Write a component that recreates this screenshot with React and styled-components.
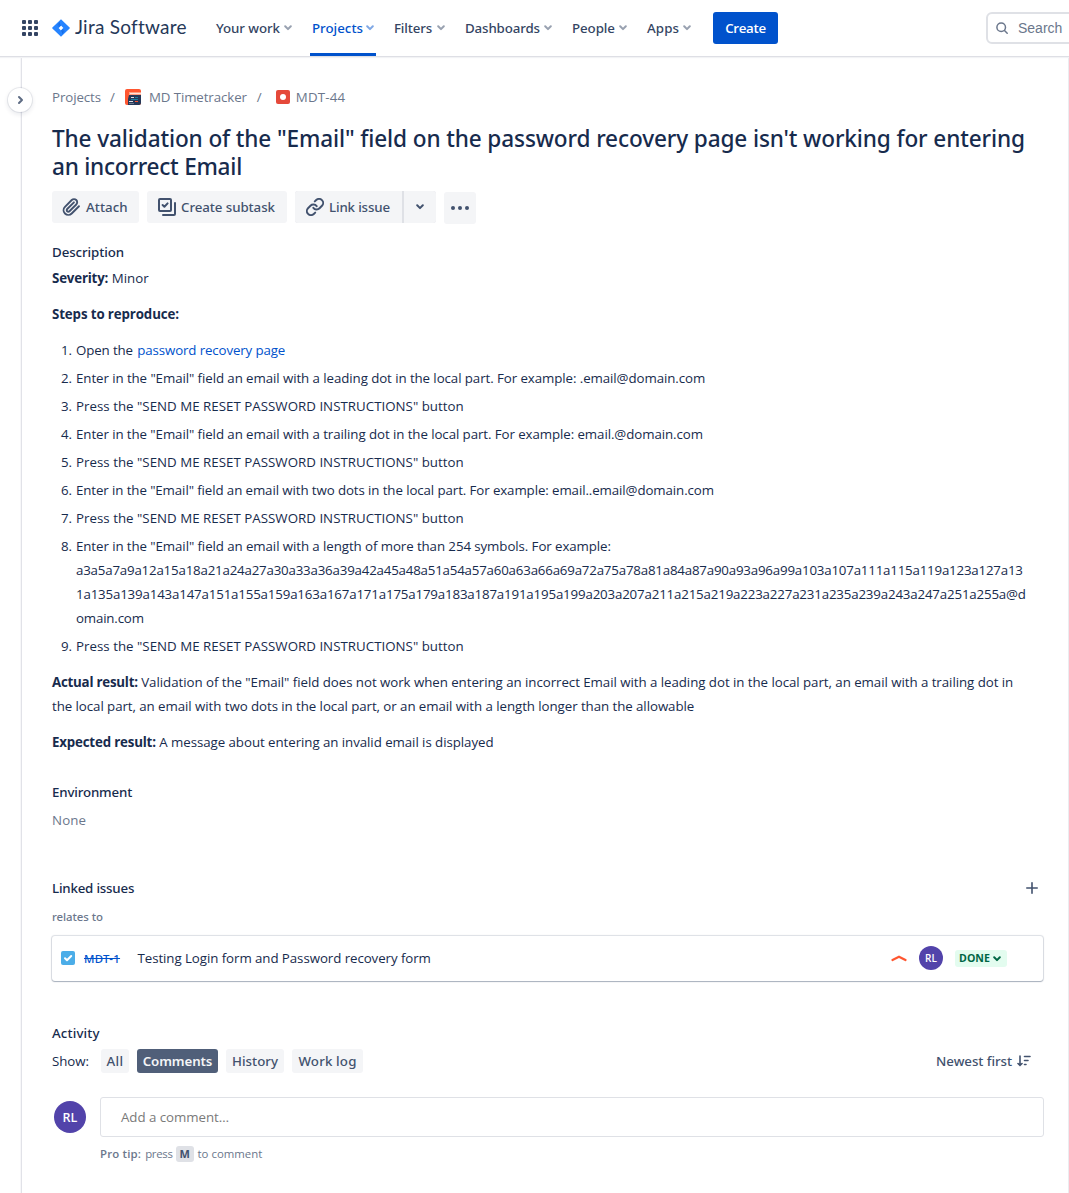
import React from "react";
import styled, { createGlobalStyle, css } from "styled-components";

const Global = createGlobalStyle`
  * { box-sizing: border-box; }
  html, body { margin: 0; background: #fff; overflow: hidden; }
  body { font-family: "Open Sans", "Noto Sans", sans-serif; font-size: 13.3px; color: #172b4d; }
  p, h1, h2, ol { margin: 0; padding: 0; font-weight: 400; }
  svg { display: block; flex: none; }
`;

const medium = css`font-family: "Noto Sans", sans-serif; font-weight: 500;`;

const Text = styled.span`
  white-space: nowrap;
  letter-spacing: ${(p) => p.$ls || 0}px;
`;
const Page = styled.div`width: 1069px; height: 1193px; display: flex; flex-direction: column; overflow: hidden;`;
const Header = styled.header`
  height: 56px; flex: none; display: flex; align-items: center; padding-left: 22px; position: relative; z-index: 1;
  box-shadow: 0 1px 0 #dedfe5, 0 2px 1px #f2f3f5;
  > * { flex: none; }
`;
const Brand = styled.div`
  display: flex; align-items: center; gap: 5px; margin-left: 14px; width: 164px;
  font-family: Lato, sans-serif; font-size: 19px; color: #253858;
  span { padding-bottom: 3px; }
`;
const Nav = styled.nav`display: flex; height: 56px; ${medium}`;
const NavItem = styled.div`
  display: flex; align-items: center; justify-content: space-between; width: ${(p) => p.$w}px; margin-right: ${(p) => p.$mr}px;
  color: ${(p) => (p.$active ? "#0052cc" : "#344563")};
  ${(p) => p.$active && css`box-shadow: inset 0 -3px #0052cc; padding: 0 2px; margin-left: -2px;`}
  svg { opacity: .5; }
`;
const Create = styled.button`
  width: 65px; height: 32px; border: 0; border-radius: 3px; background: #0052cc; color: #fff; padding: 0;
  font: 600 13.3px "Open Sans", sans-serif;
`;
const Search = styled.div`
  margin-left: 208px; width: 100px; height: 32px; border: 2px solid #dfe1e6; border-radius: 6px; display: flex; align-items: center;
  padding-left: 8px; gap: 10px; color: #6b778c; font: 14px "Liberation Sans", sans-serif;
`;
const Body = styled.div`flex: 1; display: flex;`;
const Rail = styled.aside`
  width: 22px; flex: none; border-right: 1px solid #e1e2e8; position: relative; box-shadow: inset -1px 0 #f7f7f9;
`;
const Toggle = styled.div`
  position: absolute; left: 8px; top: 32px; width: 24px; height: 24px; border-radius: 50%; background: #fff;
  box-shadow: 0 0 0 1px rgba(9,30,66,.08), 0 2px 4px 1px rgba(9,30,66,.08);
  display: flex; align-items: center; justify-content: center;
`;
const Main = styled.main`
  flex: 1; min-width: 0; padding: 29px 24px 0 30px; border-right: 1px solid #ebecf0; display: flex; flex-direction: column;
`;
const Crumbs = styled.div`height: 24px; display: flex; align-items: center; color: #6b778c;`;
const Slash = styled.span`width: 5px; margin: 0 ${(p) => p.$r}px 0 ${(p) => p.$l}px;`;
const Crumb = styled.span`display: flex; align-items: center; gap: ${(p) => p.$gap}px;`;
const Title = styled.h1`margin-top: 16px; font-size: 22.6px; line-height: 28px; && { ${medium} }`;
const Actions = styled.div`margin-top: 10px; display: flex; gap: 8px; height: 32px; ${medium} color: #42526e;`;
const Action = styled.div`
  height: 32px; width: ${(p) => p.$w}px; background: #f4f5f7; border-radius: 3px; display: flex; align-items: center;
  padding-left: ${(p) => p.$pl}px; gap: ${(p) => p.$gap || 0}px; margin-top: ${(p) => p.$mt || 0}px;
`;
const Split = styled.div`
  display: flex; gap: 2px; background: #dfe1e6; border-radius: 3px;
  > :first-child { border-radius: 3px 0 0 3px; } > :last-child { border-radius: 0 3px 3px 0; }
`;
const Label = styled.h2`
  height: 20px; line-height: 20px; font-size: 13.3px; margin-top: ${(p) => p.$mt}px; && { ${medium} }
  display: flex; align-items: center; justify-content: space-between; padding-right: 6px;
`;
const Para = styled.p`line-height: 24px; margin-top: ${(p) => (p.$mt === undefined ? 12 : p.$mt)}px; b { font-weight: 700; }`;
const Steps = styled.ol`margin-top: 12px; list-style: none; display: flex; flex-direction: column; gap: 4px;`;
const Step = styled.li`display: flex; line-height: 24px;`;
const Num = styled.span`width: 20px; text-align: right; margin-right: 4px;`;
const Link = styled.a`color: #0052cc; margin-left: 1px;`;
const Muted = styled.p`color: #6b778c; line-height: 20px; margin-top: 8px;`;
const Relates = styled.p`color: #6b778c; font-size: 11.4px; line-height: 16px; margin-top: 11px; && { ${medium} }`;
const Card = styled.div`
  margin: 11px 1px 0 0; height: 45px; background: #fff; border-radius: 3px; display: flex; align-items: center; padding: 0 0 1px 9px;
  box-shadow: 0 1px 1px rgba(9,30,66,.25), 0 0 1px 1px rgba(9,30,66,.14);
`;
const Key = styled.a`
  margin-left: 9px; width: 53px; color: #0052cc; font-size: 11.4px; ${medium} text-decoration: line-through;
`;
const Summary = styled.span`flex: 1; padding-left: .5px;`;
const Avatar = styled.div`
  width: ${(p) => p.$s}px; height: ${(p) => p.$s}px; border-radius: 50%; background: #5243aa; color: #fff; flex: none;
  display: flex; align-items: center; justify-content: center; font-size: ${(p) => p.$f}px; font-weight: 600;
`;
const Lozenge = styled.div`
  margin: 0 36px 0 12px; width: 52px; height: 17px; border-radius: 3px; background: #e3fcef; color: #006644; font-size: 10.6px; font-weight: 700;
  display: flex; align-items: center; justify-content: space-between; padding: 0 6px 0 4px;
  svg { margin-top: 2px; }
`;
const RowEnd = styled.div`display: flex; align-items: center; > svg { margin-right: 12px; }`;
const Tabs = styled.div`margin-top: 6px; height: 24px; display: flex; align-items: center; gap: 8px;`;
const ShowLabel = styled.span`width: 41px;`;
const Tab = styled.div`
  width: ${(p) => p.$w}px; height: 24px; border-radius: 3px; ${medium}
  font-weight: ${(p) => (p.$on ? 600 : 500)};
  display: flex; align-items: center; justify-content: center;
  background: ${(p) => (p.$on ? "#505f79" : "#f4f5f7")}; color: ${(p) => (p.$on ? "#f4f5f7" : "#42526e")};
`;
const Sort = styled.div`margin-left: auto; padding-right: 13px; display: flex; align-items: center; gap: 5px; ${medium} color: #42526e;`;
const Composer = styled.div`margin-top: 24px; display: flex; align-items: center; gap: 14px; padding-left: 2px;`;
const Field = styled.div`
  flex: 1; height: 40px; border: 1px solid #dfe1e6; border-radius: 3px; padding-left: 20px; display: flex; align-items: center; color: #7a7a7a;
`;
const Tip = styled.div`margin: 9px 0 0 48px; display: flex; align-items: center; height: 16px; font-size: 11.4px; line-height: 14px; color: #6b778c; b { font-weight: 600; margin-right: 4px; } > * { padding-bottom: 1px; }`;
const Kbd = styled.span`
  width: 18px; height: 16px; margin: 0 4px 0 3px; border-radius: 3px; background: #dfe1e6; color: #42526e; font-weight: 700; font-size: 11px;
  display: flex; align-items: center; justify-content: center;
`;

const Chevron = () => (
  <svg width="8" height="6" viewBox="0 0 8 6" fill="none" stroke="currentColor" strokeWidth="2" strokeLinecap="round" strokeLinejoin="round">
    <path d="M1.2 1.3 4 4.1 6.8 1.3" />
  </svg>
);
const Apps = () => (
  <svg width="16" height="16" fill="#344563">
    {[0, 6, 12].map((y) => [0, 6, 12].map((x) => <rect key={x + "-" + y} x={x} y={y} width="4" height="4" rx="1" />))}
  </svg>
);
const JiraMark = () => (
  <svg width="18" height="18" viewBox="0 0 18 18">
    <defs>
      <linearGradient id="a" x1="9" y1="4" x2="5" y2="8" gradientUnits="userSpaceOnUse"><stop offset="0" stopColor="#0f62dc" /><stop offset="1" stopColor="#2684ff" /></linearGradient>
      <linearGradient id="b" x1="9" y1="14" x2="13" y2="10" gradientUnits="userSpaceOnUse"><stop offset="0" stopColor="#0f62dc" /><stop offset="1" stopColor="#2684ff" /></linearGradient>
    </defs>
    <path d="M9 .2 17.6 8.5a.7.7 0 0 1 0 1L9 17.8.4 9.5a.7.7 0 0 1 0-1zM9 6.6 6.6 9 9 11.4 11.4 9z" fill="#2684ff" fillRule="evenodd" />
    <path d="M9 6.6A4.2 4.2 0 0 1 7.8 3L5 6l1.800 2.800z" fill="url(#a)" />
    <path d="M9 11.4a4.200 4.200 0 0 1 1.200 3.600L13 12l-1.800-2.800z" fill="url(#b)" />
  </svg>
);
const ProjectIcon = () => (
  <svg width="16" height="16" viewBox="0 0 16 16">
    <rect width="16" height="16" rx="2" fill="#ff5630" />
    <path d="M4 3h12v3H4z" fill="#ff9d80" />
    <path d="M5 4.500h11" stroke="#ffe3da" />
    <path d="M4 6h12v8a2 2 0 0 1-2 2H3v-6z" fill="#253858" />
    <path d="M6 8.500h3M4 12.500h4" stroke="#dfe1e6" /><path d="M10 8.500h3M6 10.500h7" stroke="#1d7f9e" /><path d="M10 12.500h3" stroke="#ff5630" /><path d="M4 14.500h5" stroke="#6b778c" />
  </svg>
);

const nav = [
  ["Your work", 76, 20, -0.07], ["Projects", 66, 18, 0.01], ["Filters", 51, 20, -0.15],
  ["Dashboards", 87, 20, -0.13], ["People", 55, 20, -0.07], ["Apps", 44, 22, 0.1],
];
const tabs = [["All", 28, 0.4], ["Comments", 81, -0.12], ["History", 58, 0.02], ["Work log", 71, 0.16]];

const press = <Text $ls={0.02}>Press the "SEND ME RESET PASSWORD INSTRUCTIONS" button</Text>;
const steps = [
  <><Text $ls={-0.12}>Open the </Text><Link><Text $ls={-0.127}>password recovery page</Text></Link></>,
  <Text $ls={-0.08}>Enter in the "Email" field an email with a leading dot in the local part. For example: .email@domain.com</Text>,
  press,
  <Text $ls={-0.081}>Enter in the "Email" field an email with a trailing dot in the local part. For example: email.@domain.com</Text>,
  press,
  <Text $ls={-0.099}>Enter in the "Email" field an email with two dots in the local part. For example: email..email@domain.com</Text>,
  press,
  <>
    <Text $ls={-0.085}>Enter in the "Email" field an email with a length of more than 254 symbols. For example:</Text><br />
    <Text $ls={-0.194}>a3a5a7a9a12a15a18a21a24a27a30a33a36a39a42a45a48a51a54a57a60a63a66a69a72a75a78a81a84a87a90a93a96a99a103a107a111a115a119a123a127a13</Text><br />
    <Text $ls={-0.167}>1a135a139a143a147a151a155a159a163a167a171a175a179a183a187a191a195a199a203a207a211a215a219a223a227a231a235a239a243a247a251a255a@d</Text><br />
    <Text $ls={-0.174}>omain.com</Text>
  </>,
  press,
];

export default function App() {
  return (
    <Page>
      <Global />
      <Header>
        <Apps />
        <Brand><JiraMark /><Text $ls={0.24}>Jira Software</Text></Brand>
        <Nav>
          {nav.map(([t, w, mr, ls], i) => (
            <NavItem key={t} $w={w} $mr={mr} $active={i === 1}><Text $ls={ls}>{t}</Text><Chevron /></NavItem>
          ))}
        </Nav>
        <Create><Text $ls={-0.29}>Create</Text></Create>
        <Search>
          <svg width="12" height="12" fill="none" stroke="#6b778c" strokeWidth="1.5" strokeLinecap="round"><circle cx="5.2" cy="5.2" r="4.3" /><path d="m8.5 8.5 2.7 2.7" /></svg>
          Search
        </Search>
      </Header>
      <Body>
        <Rail><Toggle><svg width="8" height="10" fill="none" stroke="#5e6c84" strokeWidth="2" strokeLinecap="round" strokeLinejoin="round"><path d="M3 2 6 5 3 8" /></svg></Toggle></Rail>
        <Main>
          <Crumbs>
            <Text $ls={-0.1}>Projects</Text><Slash $l={9} $r={10}>/</Slash>
            <Crumb $gap={8}><ProjectIcon /><Text $ls={-0.1}>MD Timetracker</Text></Crumb><Slash $l={10} $r={14}>/</Slash>
            <Crumb $gap={6}><svg width="14" height="14"><rect width="14" height="14" rx="2" fill="#e5493a" /><circle cx="7" cy="7" r="3" fill="#fff" /></svg><Text $ls={0.15}>MDT-44</Text></Crumb>
          </Crumbs>
          <Title>
            <Text $ls={-0.124}>The validation of the "Email" field on the password recovery page isn't working for entering</Text><br />
            <Text $ls={-0.25}>an incorrect Email</Text>
          </Title>
          <Actions>
            <Action $w={87} $pl={10} $gap={5}>
              <svg width="19" height="20" viewBox="0 0 24 24" fill="none" stroke="#42526e" strokeWidth="2.400" strokeLinecap="round"><path d="m21.440 11.050-9.190 9.190a6 6 0 0 1-8.490-8.490l8.570-8.570A4 4 0 1 1 18 8.840l-8.590 8.570a2 2 0 0 1-2.830-2.830l8.490-8.480" /></svg>
              <Text $ls={0.05}>Attach</Text>
            </Action>
            <Action $w={140} $pl={11} $gap={5}>
              <svg width="18" height="18" fill="none" stroke="#42526e" strokeWidth="2" strokeLinecap="round" strokeLinejoin="round"><rect x="1" y="1" width="12" height="12" rx="1" /><path d="m4.600 7 1.800 1.800 3.200-3.400" /><path d="M17 5v11a1 1 0 0 1-1 1H5" /></svg>
              <Text $ls={-0.067}>Create subtask</Text>
            </Action>
            <Split>
              <Action $w={107} $pl={11} $gap={5}>
                <svg width="18" height="18" viewBox="1 1 22 22" fill="none" stroke="#42526e" strokeWidth="2.400" strokeLinecap="round"><path d="M10 13a5 5 0 0 0 7.540.540l3-3a5 5 0 0 0-7.070-7.070l-1.720 1.710" /><path d="M14 11a5 5 0 0 0-7.540-.540l-3 3a5 5 0 0 0 7.070 7.070l1.710-1.710" /></svg>
                <Text $ls={-0.15}>Link issue</Text>
              </Action>
              <Action $w={32} $pl={12}><Chevron /></Action>
            </Split>
            <Action $w={32} $pl={7} $mt={1}><svg width="18" height="4" fill="#42526e"><circle cx="2" cy="2" r="2" /><circle cx="9" cy="2" r="2" /><circle cx="16" cy="2" r="2" /></svg></Action>
          </Actions>
          <Label $mt={19}><Text $ls={-0.095}>Description</Text></Label>
          <Para $mt={4}><b><Text $ls={-0.18}>Severity:</Text></b> <Text>Minor</Text></Para>
          <Para><b><Text $ls={-0.117}>Steps to reproduce:</Text></b></Para>
          <Steps>
            {steps.map((content, i) => <Step key={i}><Num>{i + 1}.</Num><div>{content}</div></Step>)}
          </Steps>
          <Para>
            <b><Text $ls={-0.226}>Actual result:</Text></b> <Text $ls={-0.051}>Validation of the "Email" field does not work when entering an incorrect Email with a leading dot in the local part, an email with a trailing dot in</Text><br />
            <Text $ls={-0.065}>the local part, an email with two dots in the local part, or an email with a length longer than the allowable</Text>
          </Para>
          <Para><b><Text $ls={-0.174}>Expected result:</Text></b> <Text $ls={-0.06}>A message about entering an invalid email is displayed</Text></Para>
          <Label $mt={28}><Text $ls={-0.15}>Environment</Text></Label>
          <Muted><Text $ls={0.12}>None</Text></Muted>
          <Label $mt={48}><Text $ls={-0.2}>Linked issues</Text><svg width="12" height="12" stroke="#42526e" strokeWidth="1.600" strokeLinecap="round"><path d="M6 .8v10.400M.8 6h10.400" /></svg></Label>
          <Relates><Text $ls={-0.05}>relates to</Text></Relates>
          <Card>
            <svg width="14" height="14" fill="none"><rect width="14" height="14" rx="2" fill="#4bade8" /><path d="m4 7.300 2 2L10.200 5" stroke="#fff" strokeWidth="2" strokeLinecap="round" strokeLinejoin="round" /></svg>
            <Key><Text $ls={0.3}>MDT-1</Text></Key>
            <Summary><Text $ls={-0.07}>Testing Login form and Password recovery form</Text></Summary>
            <RowEnd>
              <svg width="16" height="8" fill="none" stroke="#ff5630" strokeWidth="2.200" strokeLinecap="round" strokeLinejoin="round"><path d="M1.500 6 8 2.700 14.500 6" /></svg>
              <Avatar $s={24} $f={10}><Text>RL</Text></Avatar>
              <Lozenge><Text $ls={0.05}>DONE</Text><Chevron /></Lozenge>
            </RowEnd>
          </Card>
          <Label $mt={42}><Text $ls={0.13}>Activity</Text></Label>
          <Tabs>
            <ShowLabel><Text $ls={-0.06}>Show:</Text></ShowLabel>
            {tabs.map(([t, w, ls]) => <Tab key={t} $w={w} $on={t === "Comments"}><Text $ls={ls}>{t}</Text></Tab>)}
            <Sort>
              <Text $ls={-0.053}>Newest first</Text>
              <svg width="14" height="12" fill="none" stroke="#42526e" strokeWidth="1.600" strokeLinecap="round"><path d="M3 1v9M1 8.500 3 10.400 5 8.500M7.500 1.500h5.500M7.500 5.500h3.500M7.500 9.500h1.500" /></svg>
            </Sort>
          </Tabs>
          <Composer><Avatar $s={32} $f={12.5}><Text $ls={0.2}>RL</Text></Avatar><Field><Text $ls={-0.05}>Add a comment…</Text></Field></Composer>
          <Tip><b><Text $ls={0.18}>Pro tip:</Text></b><Text $ls={-0.3}>press</Text><Kbd>M</Kbd><Text>to comment</Text></Tip>
        </Main>
      </Body>
    </Page>
  );
}
